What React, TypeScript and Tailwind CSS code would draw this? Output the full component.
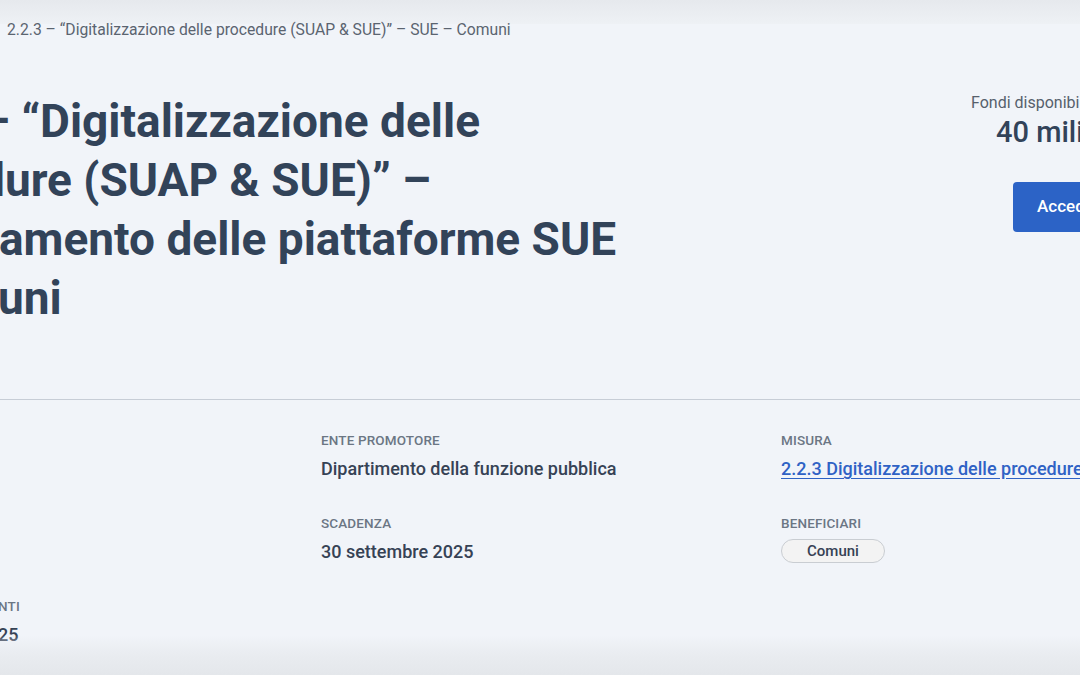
const font = { fontFamily: 'Roboto, "Noto Sans", sans-serif' }

function Item({ label, children }: { label: string; children: React.ReactNode }) {
  return (
    <div className="flex flex-col">
      <span className="text-[13.5px] leading-[20px] font-medium uppercase tracking-[0.01em] text-[#6b7684]">
        {label}
      </span>
      <div className="mt-[6px] text-[18px] leading-[26px] font-medium text-[#364255] whitespace-nowrap">
        {children}
      </div>
    </div>
  )
}

export default function App() {
  return (
    <div
      style={font}
      className="relative w-[1080px] h-[675px] overflow-hidden bg-[#f1f4f9]"
    >
      <div className="absolute inset-x-0 top-0 h-[24px] bg-gradient-to-b from-[#e6e9ed] to-[#eef1f5]" />

      <div className="relative">
        <nav className="pt-[19px] pl-[7px] text-[15.7px] leading-[22px] text-[#5b6470] whitespace-nowrap">
          2.2.3 – “Digitalizzazione delle procedure (SUAP &amp; SUE)” – SUE – Comuni
        </nav>

        <div className="flex mt-[51px]">
          <h1 className="flex-1 text-[46px] leading-[59px] font-bold text-[#324359] whitespace-nowrap">
            <div className="-ml-[19px]">– “Digitalizzazione delle</div>
            <div className="-ml-[21px]">dure (SUAP &amp; SUE)” –</div>
            <div className="-ml-[1px]">amento delle piattaforme SUE</div>
            <div className="-ml-[2px]">uni</div>
          </h1>
          <div className="w-[109px] flex flex-col items-start whitespace-nowrap">
            <span className="text-[16px] leading-[22px] text-[#56606c]">Fondi disponibili</span>
            <span className="ml-[25px] mt-px text-[29px] leading-[34px] font-medium text-[#324359]">
              40 milioni
            </span>
            <button className="ml-[42px] mt-[33px] h-[50px] px-[24px] rounded-[4px] bg-[#2c63c6] text-white text-[17px] font-medium">
              Accedi all&apos;avviso
            </button>
          </div>
        </div>

        <div className="mt-[71px] h-px bg-[#c7cdd6]" />

        <div className="grid grid-cols-[321px_460px_1fr] gap-y-[31px] pt-[30px]">
          <div />
          <Item label="Ente promotore">Dipartimento della funzione pubblica</Item>
          <Item label="Misura">
            <a href="#" className="text-[#2f62c5] underline underline-offset-[3px]">
              2.2.3 Digitalizzazione delle procedure (SUAP &amp; SUE)
            </a>
          </Item>

          <div />
          <Item label="Scadenza">30 settembre 2025</Item>
          <div className="flex flex-col">
            <span className="text-[13.5px] leading-[20px] font-medium uppercase tracking-[0.01em] text-[#6b7684]">
              Beneficiari
            </span>
            <div className="mt-[6px]">
              <span className="inline-flex items-center justify-center w-[104px] h-[24px] rounded-full border border-[#c9cdd2] bg-[#f3f3f3] text-[15px] font-medium text-[#364255]">
                Comuni
              </span>
            </div>
          </div>

          <div className="-ml-[2px]">
            <Item label="nti">25</Item>
          </div>
          <div />
          <div />
        </div>
      </div>

      <div className="absolute inset-x-0 bottom-0 h-[40px] bg-gradient-to-b from-[#f1f4f9]/0 via-[#e9ecf0] to-[#e4e7eb]" />
    </div>
  )
}
